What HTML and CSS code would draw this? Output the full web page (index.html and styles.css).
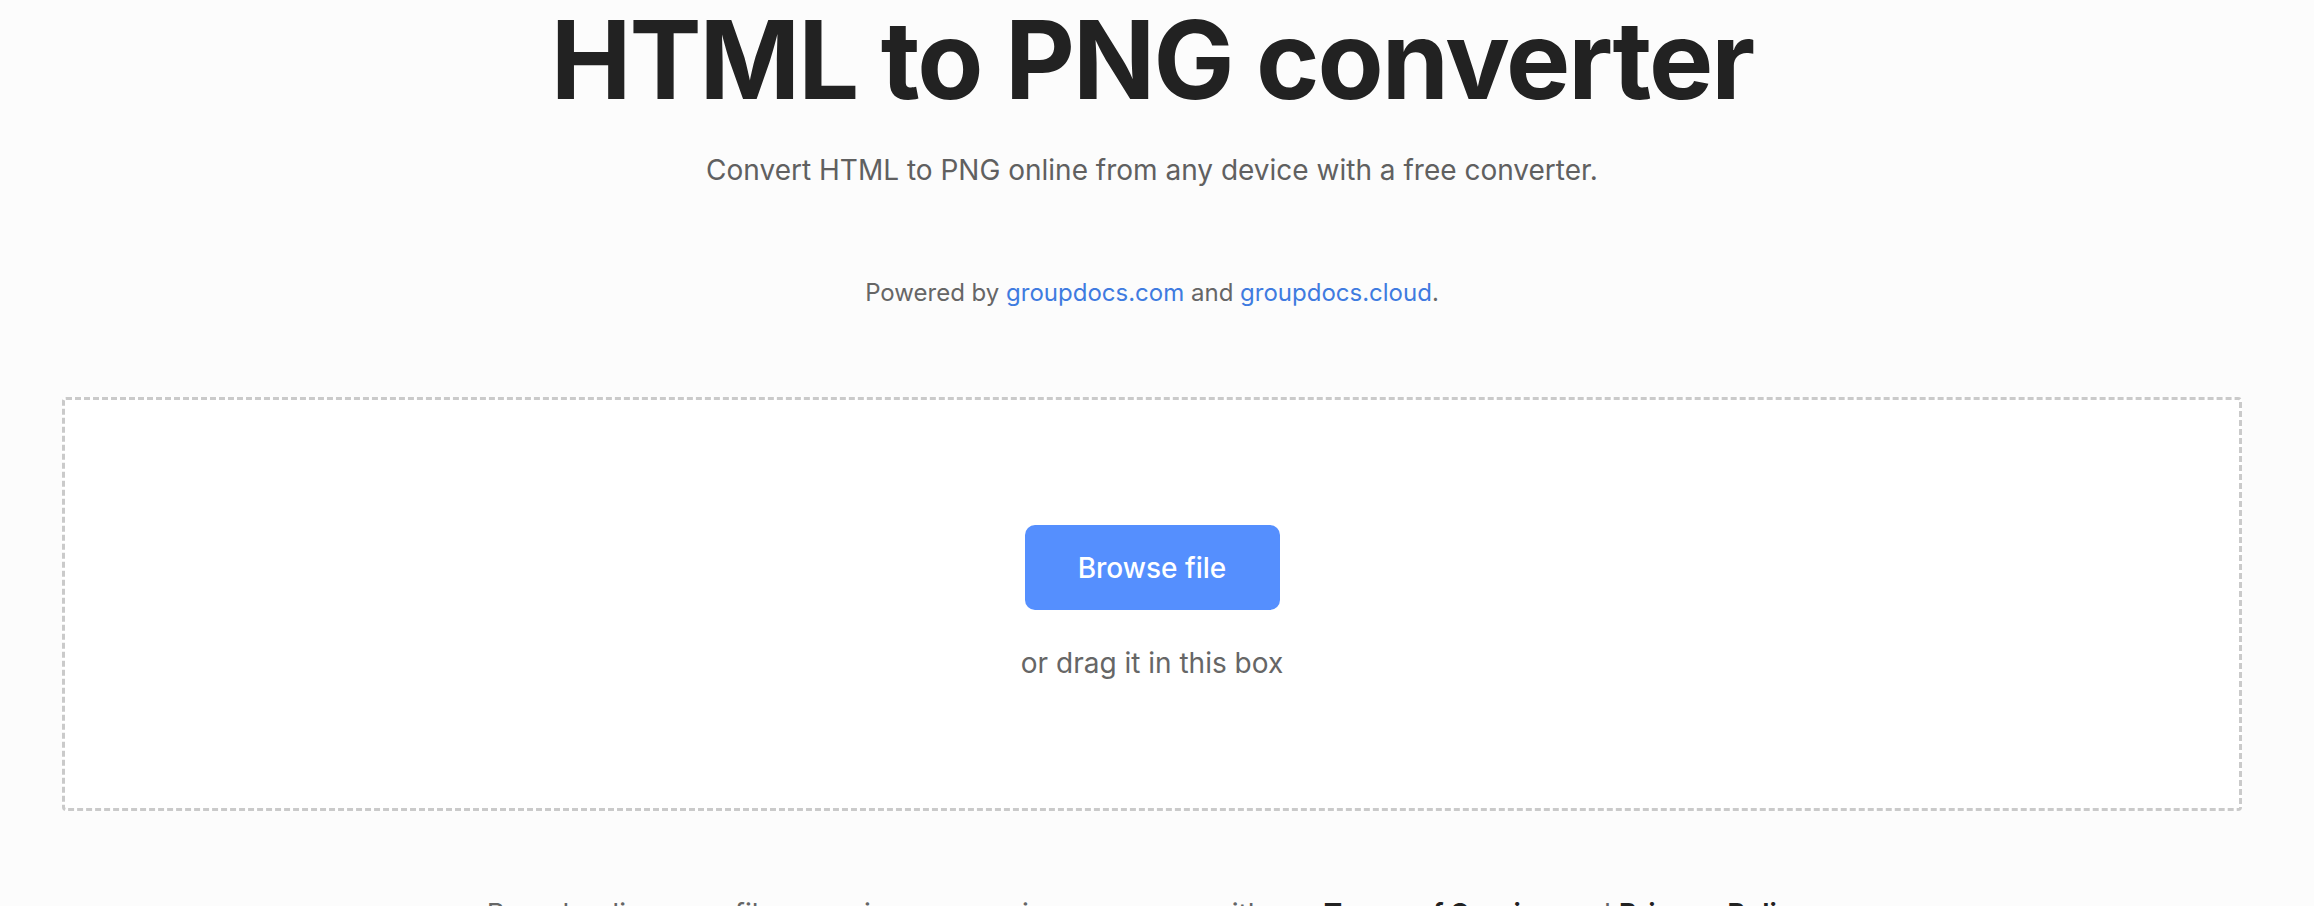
FILE: index.html
```html
<!DOCTYPE html>
<html lang="en">
<head>
<meta charset="utf-8">
<title>HTML to PNG converter</title>
<link rel="stylesheet" href="styles.css">
</head>
<body>
<main class="page">
  <h1 class="title">HTML to PNG converter</h1>
  <p class="subtitle">Convert HTML to PNG online from any device with a free converter.</p>
  <p class="powered">Powered by <a href="#" class="link">groupdocs.com</a> and <a href="#" class="link">groupdocs.cloud</a>.</p>
  <section class="dropzone">
    <button class="browse" type="button">Browse file</button>
    <p class="drag-hint">or drag it in this box</p>
  </section>
  <p class="terms">By uploading your files or using our service you agree with our <a href="#" class="terms-link">Terms of Service</a> and <a href="#" class="terms-link">Privacy Policy</a>.</p>
</main>
</body>
</html>
```

FILE: styles.css
```css
html, body {
  margin: 0;
  padding: 0;
  background: #fcfcfc;
}

body {
  font-family: Inter, "Noto Sans", "Liberation Sans", sans-serif;
  color: #222222;
}

.page {
  padding: 0 72px 0 62px;
  display: flex;
  flex-direction: column;
  align-items: stretch;
  text-align: center;
}

.title {
  margin: 6px 0 0;
  font-size: 108px;
  line-height: 108px;
  font-weight: 700;
  letter-spacing: -2px;
  color: #222222;
}

.subtitle {
  margin: 36px 0 0;
  font-size: 28px;
  line-height: 40px;
  color: #606060;
}

.powered {
  margin: 87px 0 0;
  font-size: 24px;
  line-height: 32px;
  color: #666666;
}

.link {
  color: #3f7be0;
  text-decoration: none;
}

.dropzone {
  margin-top: 88px;
  height: 414px;
  box-sizing: border-box;
  border: 3px dashed #cacaca;
  border-radius: 4px;
  background: #ffffff;
  display: flex;
  flex-direction: column;
  align-items: center;
  justify-content: center;
}

.browse {
  width: 255px;
  height: 85px;
  border: none;
  border-radius: 10px;
  background: #558ffe;
  color: #ffffff;
  font-family: Inter, "Noto Sans", "Liberation Sans", sans-serif;
  font-size: 28px;
  font-weight: 500;
  cursor: pointer;
}

.drag-hint {
  margin: 33px 0 0;
  font-size: 28px;
  line-height: 40px;
  color: #666666;
}

.terms {
  margin: 83px 0 0;
  font-size: 28px;
  line-height: 40px;
  color: #666666;
}

.terms-link {
  color: #222222;
  font-weight: 600;
  text-decoration: none;
}
```
